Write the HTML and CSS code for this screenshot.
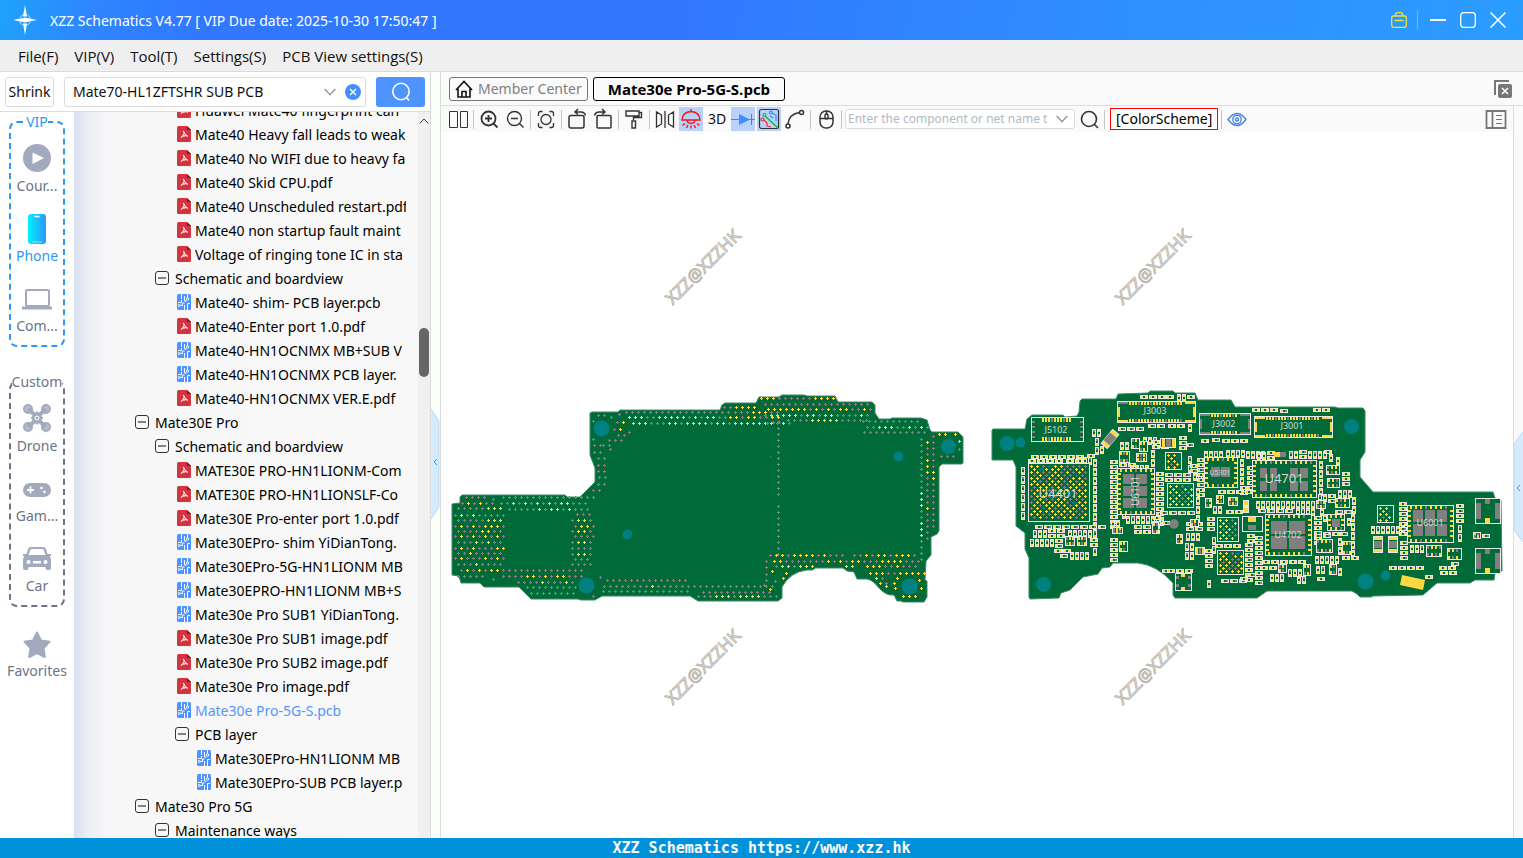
FILE: index.html
```html
<!DOCTYPE html>
<html lang="en">
<head>
    <meta charset="UTF-8">
    <meta name="viewport" content="width=device-width, initial-scale=1.0">
    <title>XZZ Schematics</title>
    <link rel="stylesheet" href="styles.css">
</head>
<body>
    <svg class="defs" aria-hidden="true">
        <symbol id="pdf" viewBox="0 0 14 16">
            <path d="M1.500 0H10L14 4V14.500Q14 16 12.500 16H1.500Q0 16 0 14.500V1.500Q0 0 1.500 0Z" fill="#d23540"/>
            <path d="M10 0L14 4H10Z" fill="#8f1620"/>
            <path d="M6.500 5Q7 8 10.800 10.500M7 7.500Q6.500 10 3.800 11.500M5.500 10.200L9 9.600" fill="none" stroke="#fff" stroke-width="1.100"/>
        </symbol>
        <symbol id="pcb" viewBox="0 0 14 16">
            <rect width="14" height="16" rx="1.500" fill="#4f93ff"/>
            <path d="M4.500 0V5M7.500 2V7H9.500M7.500 16V11M10.500 16V9.500H13M10.500 0V4M1 8.500H4.500V6M3 11.500H5.500V9H7.500" fill="none" stroke="#fff"/>
            <g fill="#4f93ff" stroke="#fff" stroke-width=".9"><circle cx="2.200" cy="11.500" r="1"/><circle cx="10.500" cy="5" r="1.200"/></g>
        </symbol>
        <symbol id="minus" viewBox="0 0 14 14">
            <rect x=".5" y=".5" width="13" height="13" rx="2.500" fill="none" stroke="#333"/>
            <path d="M3 7H11" stroke="#333" stroke-width="1.200"/>
        </symbol>
        <symbol id="chevron" viewBox="0 0 12 8">
            <path d="M.7 1L6 6.800L11.300 1" fill="none" stroke="#8f97a5" stroke-width="1.400"/>
        </symbol>
    </svg>

    <header class="titlebar">
        <svg class="logo" viewBox="0 0 26 30" fill="#fff">
            <path d="M13 0L15 11.500H11ZM13 30L15 18.500H11ZM1 15L11 13V17ZM25 15L15 13V17Z"/>
            <circle cx="13" cy="15" r="2.500"/>
            <circle cx="13" cy="15" r="5.500" fill="none" stroke="#fff" stroke-opacity=".7" stroke-dasharray="5 3.640" stroke-dashoffset="-2"/>
        </svg>
        <span class="title">XZZ Schematics V4.77 [ VIP Due date: 2025-10-30 17:50:47 ]</span>
        <div class="window-buttons">
            <button aria-label="Toolbox"><svg width="16" height="16" fill="none" stroke="#f2e33a" stroke-width="1.300"><rect x=".7" y="4" width="14.600" height="11.300" rx="2"/><path d="M4.500 4V2.500Q4.500 .7 6 .7H10Q11.500 .7 11.500 2.500V4M3.500 8.500H12.500"/></svg></button>
            <i></i>
            <button aria-label="Minimize"><svg width="16" height="16" stroke="#fff" stroke-width="2"><path d="M0 8H16"/></svg></button>
            <button aria-label="Maximize"><svg width="16" height="16" fill="none" stroke="#fff" stroke-width="1.300"><rect x=".7" y=".7" width="14.600" height="14.600" rx="3"/></svg></button>
            <button aria-label="Close"><svg width="16" height="16" stroke="#fff" stroke-width="1.500"><path d="M.5 .5L15.500 15.500M15.500 .5L.5 15.500"/></svg></button>
        </div>
    </header>

    <nav class="menu">
        <button>File(F)</button>
        <button>VIP(V)</button>
        <button>Tool(T)</button>
        <button>Settings(S)</button>
        <button>PCB View settings(S)</button>
    </nav>

    <main>
        <section class="left">
            <div class="search-row">
                <button class="shrink">Shrink</button>
                <div class="combo">
                    <input type="text" aria-label="Search files" value="Mate70-HL1ZFTSHR SUB PCB">
                    <svg width="12" height="8"><use href="#chevron"/></svg>
                    <button aria-label="Clear"><svg width="16" height="16"><circle cx="8" cy="8" r="8" fill="#4590f7"/><path d="M5 5L11 11M11 5L5 11" stroke="#fff" stroke-width="1.400"/></svg></button>
                </div>
                <button class="go" aria-label="Search"><svg width="20" height="20" fill="none" stroke="#fff" stroke-width="1.600"><circle cx="10" cy="9.500" r="8.200"/><path d="M15 15L18 18.500"/></svg></button>
            </div>

            <div class="browser">
                <nav class="side">
                    <fieldset class="vip">
                        <legend>VIP</legend>
                        <button><svg viewBox="0 0 28 28"><circle cx="14" cy="14" r="14" fill="#a2aabd"/><path d="M9.500 8.500V20L21 14Z" fill="#fff"/></svg>Cour...</button>
                        <button class="active"><svg viewBox="0 0 28 28"><defs><linearGradient id="ph"><stop stop-color="#00f0ff"/><stop offset="1" stop-color="#2e97ff"/></linearGradient></defs><rect x="5" y="0" width="18" height="30" rx="3" fill="url(#ph)"/><path d="M11.500 2.500H16.500" stroke="#fff" stroke-width="1.500"/><path d="M9 28H19" stroke="#8de4ff"/></svg>Phone</button>
                        <button><svg viewBox="0 0 28 28" fill="none" stroke="#a2aabd" stroke-width="2"><rect x="3" y="6" width="23" height="16" rx="1"/><path d="M-1 24H29" stroke-width="3"/></svg>Com...</button>
                    </fieldset>
                    <fieldset class="custom">
                        <legend>Custom</legend>
                        <button><svg viewBox="0 0 28 28" fill="none" stroke="#a2aabd" stroke-width="2"><g fill="#b8bfcc"><circle cx="5" cy="5" r="4"/><circle cx="23" cy="5" r="4"/><circle cx="5" cy="23" r="4"/><circle cx="23" cy="23" r="4"/></g><path d="M5 5L14 13L23 5M5 23L14 15L23 23" stroke-width="4"/><path d="M14 8.500L19 14L14 19.500L9 14Z" fill="#a2aabd"/><circle cx="14" cy="14" r="2" stroke="#fff" stroke-width="1"/></svg>Drone</button>
                        <button><svg viewBox="0 0 28 28"><rect y="9" width="28" height="14" rx="7" fill="#a2aabd"/><path d="M4 16H11M7.500 12.500V19.500" stroke="#fff" stroke-width="1.800"/><circle cx="18.500" cy="14" r="1.300" fill="#fff"/><circle cx="21.500" cy="18" r="1.300" fill="#fff"/></svg>Gam...</button>
                        <button><svg viewBox="0 0 28 28" fill="#a2aabd"><path d="M8 3H20Q22 3 23 5L24.500 10H28V12H26.500Q28 14 28 16V24Q28 26 26 26H24Q22.500 26 22.500 23H5.500Q5.500 26 4 26H2Q0 26 0 24V16Q0 14 1.500 12H0V10H3.500L5 5Q6 3 8 3Z"/><path d="M8.500 5H19.500Q20.500 5 21 6.500L22.500 11H5.500L7 6.500Q7.500 5 8.500 5ZM10 17H18V19.500H10Z" fill="#fff"/><circle cx="5.500" cy="18" r="2" fill="#fff"/><circle cx="22.500" cy="18" r="2" fill="#fff"/></svg>Car</button>
                    </fieldset>
                    <button class="favorites"><svg viewBox="0 0 28 28"><path d="M14 1.500L18 9.500L26.500 10.800L20.500 17L21.800 26L14 22L6.200 26L7.500 17L1.500 10.800L10 9.500Z" fill="#a2aabd" stroke="#a2aabd" stroke-width="2" stroke-linejoin="round"/></svg>Favorites</button>
                </nav>

                <ul class="tree">
                    <li class="l3"><svg><use href="#pdf"/></svg><span>Huawei Mate40 fingerprint can</span></li>
                    <li class="l3"><svg><use href="#pdf"/></svg><span>Mate40 Heavy fall leads to weak</span></li>
                    <li class="l3"><svg><use href="#pdf"/></svg><span>Mate40 No WIFI due to heavy fa</span></li>
                    <li class="l3"><svg><use href="#pdf"/></svg><span>Mate40 Skid CPU.pdf</span></li>
                    <li class="l3"><svg><use href="#pdf"/></svg><span>Mate40 Unscheduled restart.pdf</span></li>
                    <li class="l3"><svg><use href="#pdf"/></svg><span>Mate40 non startup fault maint</span></li>
                    <li class="l3"><svg><use href="#pdf"/></svg><span>Voltage of ringing tone IC in sta</span></li>
                    <li class="l2 node"><svg><use href="#minus"/></svg><span>Schematic and boardview</span></li>
                    <li class="l3"><svg><use href="#pcb"/></svg><span>Mate40- shim- PCB layer.pcb</span></li>
                    <li class="l3"><svg><use href="#pdf"/></svg><span>Mate40-Enter port 1.0.pdf</span></li>
                    <li class="l3"><svg><use href="#pcb"/></svg><span>Mate40-HN1OCNMX MB+SUB V</span></li>
                    <li class="l3"><svg><use href="#pcb"/></svg><span>Mate40-HN1OCNMX PCB layer.</span></li>
                    <li class="l3"><svg><use href="#pdf"/></svg><span>Mate40-HN1OCNMX VER.E.pdf</span></li>
                    <li class="l1 node"><svg><use href="#minus"/></svg><span>Mate30E Pro</span></li>
                    <li class="l2 node"><svg><use href="#minus"/></svg><span>Schematic and boardview</span></li>
                    <li class="l3"><svg><use href="#pdf"/></svg><span>MATE30E PRO-HN1LIONM-Com</span></li>
                    <li class="l3"><svg><use href="#pdf"/></svg><span>MATE30E PRO-HN1LIONSLF-Co</span></li>
                    <li class="l3"><svg><use href="#pdf"/></svg><span>Mate30E Pro-enter port 1.0.pdf</span></li>
                    <li class="l3"><svg><use href="#pcb"/></svg><span>Mate30EPro- shim YiDianTong.</span></li>
                    <li class="l3"><svg><use href="#pcb"/></svg><span>Mate30EPro-5G-HN1LIONM MB</span></li>
                    <li class="l3"><svg><use href="#pcb"/></svg><span>Mate30EPRO-HN1LIONM MB+S</span></li>
                    <li class="l3"><svg><use href="#pcb"/></svg><span>Mate30e Pro SUB1 YiDianTong.</span></li>
                    <li class="l3"><svg><use href="#pdf"/></svg><span>Mate30e Pro SUB1 image.pdf</span></li>
                    <li class="l3"><svg><use href="#pdf"/></svg><span>Mate30e Pro SUB2 image.pdf</span></li>
                    <li class="l3"><svg><use href="#pdf"/></svg><span>Mate30e Pro image.pdf</span></li>
                    <li class="l3 selected"><svg><use href="#pcb"/></svg><span>Mate30e Pro-5G-S.pcb</span></li>
                    <li class="l3 node"><svg><use href="#minus"/></svg><span>PCB layer</span></li>
                    <li class="l4"><svg><use href="#pcb"/></svg><span>Mate30EPro-HN1LIONM MB</span></li>
                    <li class="l4"><svg><use href="#pcb"/></svg><span>Mate30EPro-SUB PCB layer.p</span></li>
                    <li class="l1 node"><svg><use href="#minus"/></svg><span>Mate30 Pro 5G</span></li>
                    <li class="l2 node"><svg><use href="#minus"/></svg><span>Maintenance ways</span></li>
                </ul>
                <div class="scrollbar">
                    <svg width="10" height="6"><path d="M.5 5.500L5 1L9.500 5.500" fill="none" stroke="#444"/></svg>
                    <div class="thumb"></div>
                </div>
            </div>
        </section>

        <button class="gutter gutter-left" aria-label="Hide file list">
            <svg width="9" height="110"><path d="M0 0L8 12V98L0 110Z" fill="#d6eafc"/><path d="M0 0L8 12V98L0 110" fill="none" stroke="#b5d9f8"/><path d="M6 50L3 53L6 56" fill="none" stroke="#3d9bf5"/></svg>
        </button>

        <section class="right">
            <div class="tabs">
                <button class="tab"><svg width="18" height="18" fill="none" stroke="#111" stroke-width="1.600"><path d="M1 10L9 1.500L17 10M3 8.500V17H15V8.500M7 17V11.500H11V17"/></svg>Member Center</button>
                <button class="tab current">Mate30e Pro-5G-S.pcb</button>
                <button class="close-all" aria-label="Close all"><svg width="18" height="18"><path d="M1 15V1H15" fill="none" stroke="#777" stroke-width="2"/><rect x="4" y="4" width="14" height="14" rx="2" fill="#777"/><path d="M8 8L14 14M14 8L8 14" stroke="#fff" stroke-width="1.500"/></svg></button>
            </div>
            <div class="work">
                <div class="view">
                    <div class="toolbar">
                        <button aria-label="Split view"><svg viewBox="0 0 24 24"><path d="M3.500 4.500H11.500V20.500H3.500ZM14.500 4.500H21.500V20.500H14.500Z"/></svg></button>
                        <i></i>
                        <button aria-label="Zoom in"><svg viewBox="0 0 24 24" stroke-width="1.800"><circle cx="11.500" cy="11.500" r="7"/><path d="M16.500 16.500L20.500 20.500M8 11.500H15M11.500 8V15"/></svg></button>
                        <button aria-label="Zoom out"><svg viewBox="0 0 24 24" stroke-width="1.400"><circle cx="11.500" cy="11.500" r="7"/><path d="M16.500 16.500L20.500 20.500M8 11.500H15"/></svg></button>
                        <i></i>
                        <button aria-label="Fit"><svg viewBox="0 0 24 24" stroke-width="1.300"><circle cx="12" cy="12.500" r="5"/><path d="M4.500 9V6.500Q4.500 4.500 6.500 4.500H8.500M15.500 4.500H17.500Q19.500 4.500 19.500 6.500V9M19.500 16V18.500Q19.500 20.500 17.500 20.500H15.500M8.500 20.500H6.500Q4.500 20.500 4.500 18.500V16"/></svg></button>
                        <i></i>
                        <button aria-label="Rotate right"><svg viewBox="0 0 24 24" stroke-width="1.500"><rect x="4" y="8.500" width="15" height="12.500" rx="2"/><path d="M10 5H16Q19.500 5 20.500 8.500M13 2L10 5L13 7.500"/></svg></button>
                        <button aria-label="Rotate left"><svg viewBox="0 0 24 24" stroke-width="1.500"><rect x="6" y="8.500" width="14" height="12.500" rx="1"/><path d="M14 5H8Q4.500 5 3.500 8.500M11 2L14 5L11 7.500"/></svg></button>
                        <i></i>
                        <button aria-label="Paint"><svg viewBox="0 0 24 24" stroke-width="1.400"><path d="M4 4H17V9H4ZM17 5.500H19.500V10.500H11.500V13M10 14H13.500V21H10Z"/></svg></button>
                        <i></i>
                        <button aria-label="Mirror"><svg viewBox="0 0 24 24" stroke-width="1.300"><path d="M12 4V21M3.500 5V20L8.500 17V8ZM20.500 5V20L15.500 17V8Z"/></svg></button>
                        <button class="on" aria-label="Lamp"><svg class="red" viewBox="0 0 24 24" stroke-width="1.400"><path d="M3 13Q3.500 5 12 4.500Q20.500 5 21 13ZM12 2V5M8 13.500Q8.500 16.500 12 16.500Q15.500 16.500 16 13.500M6 16.500L3.500 18.500M9 18L7.500 21M12 18.500V21.500M15 18L16.500 21M18 16.500L20.500 18.500"/></svg></button>
                        <button class="three">3D</button>
                        <button class="on" aria-label="Diode"><svg viewBox="0 0 24 24"><path d="M0 12.500H24M20.500 7V18" stroke="#4080f0"/><path d="M8 7V18L19 12.500Z" fill="#3f8cff" stroke="none"/></svg></button>
                        <button class="on" aria-label="Nets"><svg viewBox="0 0 24 24" stroke-width="1.200"><rect x="2.500" y="2.500" width="19" height="19" rx="2"/><path d="M8 9L21 21" stroke="#18b83c" stroke-width="1.500"/><circle cx="7.500" cy="8" r="1.500" stroke="#18b83c"/><path d="M15 6L19 8V14M13 9L16 11" stroke="#2f8cf7"/><circle cx="14" cy="5.500" r="1.500" stroke="#2f8cf7"/><path d="M7 13L10 16V19L14 20" stroke="#f03030"/><circle cx="5.500" cy="12.500" r="1.500" stroke="#f03030"/></svg></button>
                        <button aria-label="Arc"><svg viewBox="0 0 24 24" stroke-width="1.500"><circle cx="18.500" cy="5.500" r="2"/><circle cx="5" cy="19" r="2"/><path d="M5 17Q6 7 16.500 5.500"/></svg></button>
                        <i></i>
                        <button aria-label="Mouse"><svg viewBox="0 0 24 24" stroke-width="1.500"><rect x="6" y="4" width="13" height="17" rx="6"/><path d="M6 11.500H19M12.500 8V4"/><rect x="11" y="7" width="3" height="5" rx="1.500"/></svg></button>
                        <i></i>
                        <div class="combo net">
                            <input type="text" aria-label="Component or net name" placeholder="Enter the component or net name to search">
                            <svg width="12" height="8"><use href="#chevron"/></svg>
                        </div>
                        <button aria-label="Find"><svg viewBox="0 0 24 24" stroke-width="1.600"><circle cx="12" cy="12" r="7.500"/><path d="M17 17L21 21"/></svg></button>
                        <i></i>
                        <button class="scheme">[ColorScheme]</button>
                        <i></i>
                        <button aria-label="Visibility"><svg class="blue" viewBox="0 0 24 24" stroke-width="1.400"><path d="M3 12.500Q12 .5 21 12.500Q12 24.500 3 12.500Z"/><circle cx="12" cy="12.500" r="4.200"/><circle cx="12" cy="12.500" r="1.500"/></svg></button>
                        <button class="panel" aria-label="Panel"><svg viewBox="0 0 24 24" stroke-width="1.800"><path d="M2.500 4H21.500V21H2.500ZM8.500 4V21"/><path d="M12 8.500H18M12 12.500H18M12 16.500H18" stroke-width="1.200"/></svg></button>
                    </div>

                    <svg class="canvas" viewBox="441 132 1072 706">
                        <g class="watermark">
                            <text transform="translate(704 268) rotate(-45)">XZZ@XZZHK</text>
                            <text transform="translate(1154 268) rotate(-45)">XZZ@XZZHK</text>
                            <text transform="translate(704 668) rotate(-45)">XZZ@XZZHK</text>
                            <text transform="translate(1154 668) rotate(-45)">XZZ@XZZHK</text>
                        </g>
                        <g class="pcb-body">
                            <path d="M452 504L460 503V497L462 495H565L567 497H580L595 482V468L590 455V413L592 412H618L620 410H720L722 405L725 403H756L759 397H779L782 395H804L807 396H835L838 402H872L875 405V413L879 419H890L892 418H921L927 420L930 430L932 432H958L963 437V463L962 464H942L939 467V531L937 534L931 537V555L926 561L925 580L927 581V597L924 602H903L901 601H897L894 595Q886 596 879 588Q873 580 867 579H857L854 572L847 571L843 568H815L813 570H807Q790 572 782 587V598L778 601H698L690 596H602L595 600H581L578 599H531L519 587H484L480 583H461L459 576L452 575Z"/>
                            <path d="M992 460V430L993 429H1025L1027 419L1032 415H1063L1065 417L1077 416L1079 412L1080 401L1082 399H1116L1118 394L1148 393L1150 391H1173L1175 393H1195L1198 400H1231L1235 407H1335L1338 408H1363L1365 411V452L1360 460V477L1373 492H1493L1495 498L1501 500L1502 571L1495 573L1494 580H1475L1470 583H1437L1423 595L1373 596L1371 597H1360L1357 594L1352 591H1267L1257 598H1175L1173 595V583Q1157 565 1138 563H1113L1110 567L1102 568L1098 574L1083 577L1070 590L1061 593L1059 598L1030 599L1029 597V558L1025 549V533L1016 526V467L1013 460Z"/>
                        </g>
                        <g id="pads"></g>
                        <g class="hole">
                            <circle cx="601.500" cy="428.500" r="8"/><circle cx="627.500" cy="534.500" r="5"/><circle cx="586.500" cy="585.500" r="8"/>
                            <circle cx="948.500" cy="446.500" r="7.500"/><circle cx="898.500" cy="456.500" r="5"/><circle cx="909.500" cy="586.500" r="8"/>
                            <circle cx="1007" cy="443.500" r="7.500"/><circle cx="1020.500" cy="442.500" r="5"/><circle cx="1043.500" cy="584.500" r="7.500"/>
                            <circle cx="1351.500" cy="426.500" r="7.500"/><circle cx="1365.500" cy="581.500" r="8"/><circle cx="1385.500" cy="575.500" r="5"/>
                        </g>
                        <path d="M1402 575L1425 580L1423 590L1400 585Z" fill="#ffd840"/>
                        <g transform="rotate(40 1110 439)"><rect x="1106" y="430" width="8" height="18" fill="#ffd840" stroke="#e8e8e8"/><rect x="1106" y="434" width="8" height="10" fill="#808080"/></g>
                        <circle cx="1174" cy="524" r="4.700" fill="#808080"/>
                        <g class="ref">
                            <text x="1056" y="433">J5102</text>
                            <text x="1155" y="414">J3003</text>
                            <text x="1224" y="427">J3002</text>
                            <text x="1292" y="429">J3001</text>
                            <text x="1058" y="498" class="big">U4401</text>
                            <text class="mid" transform="translate(1139 491) rotate(-90)">U6101</text>
                            <text x="1220" y="475" class="small">U5301</text>
                            <text x="1284" y="483" class="big">U4701</text>
                            <text x="1288" y="538">U4702</text>
                            <text x="1430" y="526">U6001</text>
                        </g>
                    </svg>
                </div>
                <button class="gutter gutter-right" aria-label="Show side panel">
                    <svg width="9" height="110"><path d="M9 0L0 12V98L9 110Z" fill="#d6eafc"/><path d="M9 0L0 12V98L9 110" fill="none" stroke="#b5d9f8"/><path d="M6 53L3 56L6 59" fill="none" stroke="#3d9bf5"/></svg>
                </button>
            </div>
        </section>
    </main>

    <footer>XZZ Schematics https://www.xzz.hk</footer>
    <script src="board.js"></script>
</body>
</html>
```
FILE: styles.css
```css
* {
    box-sizing: border-box;
}
body {
    margin: 0;
    height: 100vh;
    display: flex;
    flex-direction: column;
    overflow: hidden;
    background: #fff;
    color: #111;
    font-family: "Noto Sans", "Noto Sans CJK SC", sans-serif;
    font-size: 14px;
    line-height: 20px;
}
button,
input {
    font: inherit;
    color: inherit;
    margin: 0;
    padding: 0;
    border: 0;
    background: none;
}
svg {
    display: block;
    flex: none;
}
.defs {
    position: absolute;
    width: 0;
    height: 0;
}

/* title bar */
.titlebar {
    height: 40px;
    flex: none;
    display: flex;
    align-items: center;
    padding: 0 17px 0 12px;
    color: #fff;
    background: linear-gradient(100deg, #1fa2fb 0, #2e86ff 90px, #3178ff 200px, #3178ff 45%, #2f90ff 75%, #2a9cff 100%);
}
.logo {
    width: 26px;
    height: 30px;
    margin-right: 12px;
}
.title {
    flex: 1;
    padding-top: 2px;
    white-space: nowrap;
}
.window-buttons {
    display: flex;
    align-items: center;
    gap: 14px;
}
.window-buttons i {
    width: 1px;
    height: 20px;
    margin: 0 -2px 0 -4px;
    background: #73b8ff;
}

/* menu */
.menu {
    height: 32px;
    flex: none;
    display: flex;
    align-items: center;
    gap: 16px;
    padding: 0 18px;
    background: #efefef;
    border-bottom: 1px solid #dadada;
    font-family: "Open Sans", sans-serif;
    font-size: 15px;
}

main {
    flex: 1;
    min-height: 0;
    display: flex;
}
.left {
    width: 431px;
    flex: none;
    display: flex;
    flex-direction: column;
    border-right: 1px solid #dcdcdc;
}
.search-row {
    height: 40px;
    flex: none;
    display: flex;
    align-items: center;
    padding: 0 5px;
    border-bottom: 1px solid #dcdcdc;
}
.shrink {
    width: 49px;
    height: 30px;
    border: 1px solid #dcdcdc;
    border-radius: 3px;
    white-space: nowrap;
}
.combo {
    display: flex;
    align-items: center;
    border: 1px solid #dcdcdc;
    border-radius: 3px;
    background: #fff;
}
.search-row .combo {
    flex: 1;
    height: 30px;
    margin: 0 10px;
    padding: 0 4px 0 8px;
    gap: 9px;
}
.combo input {
    flex: 1;
    min-width: 0;
    outline: none;
}
.go {
    width: 49px;
    height: 30px;
    border-radius: 3px;
    background: #4f93ff;
}
.go svg {
    margin: 0 auto;
}

/* categories */
.browser {
    flex: 1;
    min-height: 0;
    display: flex;
}
.side {
    width: 74px;
    flex: none;
    display: flex;
    flex-direction: column;
    align-items: center;
    color: #6b7487;
}
.side fieldset {
    width: 56px;
    min-width: 0;
    margin: 0;
    padding: 2px 0 1px;
    border: 2px dashed;
    border-radius: 8px;
}
.side legend {
    margin: 0 auto;
    padding: 0;
}
.side button {
    display: flex;
    flex-direction: column;
    align-items: center;
    gap: 4px;
    width: 100%;
    height: 70px;
    padding-top: 10px;
}
.side button svg {
    width: 28px;
    height: 28px;
    overflow: visible;
}
.side .vip {
    border-color: #2e97f5;
}
.vip legend,
.side .active {
    color: #2e97f5;
}
.side .custom {
    margin-top: 25px;
}
.side .favorites {
    gap: 2px;
    margin-top: 14px;
}

/* file tree */
.tree {
    flex: 1;
    min-width: 0;
    margin: 0;
    padding: 0 12px 0 61px;
    overflow: hidden;
    list-style: none;
    color: #000;
    background: linear-gradient(90deg, #d9e1f1 0, #ebeef4 14px, #f7f7f8 34px, #f8f8f8 100%);
}
.tree li:first-child {
    margin-top: -14px;
}
.tree li {
    height: 24px;
    display: flex;
    align-items: center;
    gap: 4px;
    white-space: nowrap;
    overflow: hidden;
}
.tree span {
    padding-top: 2px;
}
.tree svg {
    width: 14px;
    height: 16px;
}
.tree .node {
    gap: 6px;
}
.tree .node svg {
    height: 14px;
}
.l2 {
    padding-left: 20px;
}
.l3 {
    padding-left: 42px;
}
.l4 {
    padding-left: 62px;
}
.l3.node {
    padding-left: 40px;
}
.selected {
    color: #5596ff;
}
.scrollbar {
    width: 12px;
    flex: none;
    padding-top: 6px;
    background: #f0f0f0;
}
.scrollbar svg {
    margin: 0 auto;
}
.thumb {
    width: 10px;
    height: 49px;
    margin: 204px auto 0;
    border-radius: 5px;
    background: #666;
}

/* collapse handles */
.gutter {
    width: 9px;
    flex: none;
    display: flex;
    align-items: center;
}
.gutter-left {
    padding-top: 18px;
    background: #fafffa;
}
.gutter-right {
    padding-top: 30px;
    background: #fafafa;
}

.right {
    flex: 1;
    min-width: 0;
    display: flex;
    flex-direction: column;
    border-left: 1px solid #dcdcdc;
}
.tabs {
    height: 34px;
    flex: none;
    display: flex;
    align-items: center;
    gap: 5px;
    padding: 0 11px 0 8px;
    background: #fafafa;
    border-bottom: 1px solid #dcdcdc;
}
.tab {
    height: 24px;
    display: flex;
    align-items: center;
    gap: 5px;
    padding: 0 5px;
    border: 1px solid #777;
    border-radius: 3px;
    color: #808080;
    white-space: nowrap;
}
.tab.current {
    padding: 0 14px;
    border-color: #000;
    color: #000;
    font-family: "Open Sans", sans-serif;
    font-size: 15px;
    font-weight: bold;
}
.close-all {
    margin-left: auto;
}
.work {
    flex: 1;
    min-height: 0;
    display: flex;
}
.view {
    flex: 1;
    min-width: 0;
    display: flex;
    flex-direction: column;
    border-right: 1px solid #dcdcdc;
}
.toolbar {
    height: 26px;
    flex: none;
    display: flex;
    align-items: center;
    gap: 2px;
    padding: 0 5px;
    background: #fafafa;
}
.toolbar > button {
    height: 24px;
    flex: none;
}
.toolbar > button svg {
    width: 24px;
    height: 24px;
    fill: none;
    stroke: #333;
}
.toolbar > i {
    width: 1px;
    height: 19px;
    margin: 0 1px;
    background: #c4c4c4;
}
.toolbar .three {
    width: 24px;
}
.toolbar .on {
    background: #b9d2fb;
}
.toolbar > button .red {
    stroke: #ff1010;
}
.toolbar > button .blue {
    stroke: #4a86e0;
}
.net {
    width: 230px;
    height: 20px;
    padding: 0 6px 0 2px;
    gap: 9px;
    font-size: 12px;
}
.net input::placeholder {
    color: #b4b8c0;
    opacity: 1;
}
.toolbar > .scheme {
    height: 22px;
    margin-left: 2px;
    padding: 0 5px;
    border: 1px solid #f00;
    background: #fff;
    color: #000;
}
.toolbar > .panel {
    margin-left: auto;
}
.toolbar > .panel svg {
    stroke: #777;
}

/* board */
.canvas {
    flex: 1;
    min-height: 0;
    width: 100%;
}
.watermark {
    fill: #fff;
    stroke: #bcb8ae;
    stroke-width: 1;
    font-size: 17px;
    text-anchor: middle;
    dominant-baseline: middle;
}
.pcb-body {
    fill: #006b38;
    stroke: #3a8b62;
    stroke-linejoin: round;
}
.hole {
    fill: #008080;
}
.ref {
    fill: #d8d8d8;
    font-size: 9px;
    text-anchor: middle;
}
.ref .big {
    font-size: 13px;
}
.ref .mid {
    font-size: 10px;
}
.ref .small {
    font-size: 7px;
}

footer {
    height: 20px;
    flex: none;
    background: #0091db;
    color: #fff;
    text-align: center;
    font-family: "DejaVu Sans Mono", monospace;
    font-size: 15px;
    font-weight: bold;
}
```
FILE: board.js
```javascript
const YELLOW = "#ffd840";
const GREY = "#808080";
const TEAL = "#008080";
const GREEN = "#006b38";
const WHITE = "#e8e8e8";

let out = "";

function rect(x, y, w, h, fill) {
    out += `<rect x="${x}" y="${y}" width="${w}" height="${h}" fill="${fill}"/>`;
}
function box(x, y, w, h) {
    rect(x, y, w, h, WHITE);
    rect(x + 1, y + 1, w - 2, h - 2, GREEN);
}
function cross(x, y, fill) {
    rect(x - 1, y, 3, 1, fill);
    rect(x, y - 1, 1, 3, fill);
}

// back side vias: y, first x, pattern (g grey, y yellow, space nothing)
const vias = [
    [497, 466, "gggg"], [499, 493, "g"], [497, 503, "gggggggggggggggg"],
    [503, 462, "gygygg"], [503, 501, "ggygygygygyyggg"],
    [508, 458, "gggggyyy"], [509, 509, "gggggygyygyggg"],
    [515, 455, "gygyggggg"], [514, 577, "ggg"],
    [520, 458, "gggggyyy"], [520, 572, "gyyg"],
    [526, 455, "gygygyyyg"], [526, 575, "gyyg"],
    [531, 458, "ggggyygg"], [531, 572, "gyyg"],
    [536, 455, "gygygygyg"], [536, 575, "gggg"],
    [542, 458, "gggygygg"], [542, 572, "gyyg"],
    [548, 455, "gygygggyy"], [548, 572, "gggg"],
    [553, 458, "ggyggggg"], [554, 572, "gyyg"],
    [558, 455, "gygggygyg"], [559, 575, "ggg"],
    [564, 458, "gggygggg"], [564, 572, "gggg"],
    [570, 461, "gygygyygggggggggggggg"],
    [576, 458, "ggggg"], [579, 493, "g"], [576, 503, "ggggyygygyyggg"],
    [582, 518, "ggggygggyg"], [587, 527, "ggggggggg"], [593, 531, "gggggggg"],
    [577, 600, "g"], [580, 607, "gggggggggggggg"],
    [586, 604, "ggggggggygggggggggggggggggggg"],
    [591, 603, "ggggggggggggggg"],
    [596, 593, "g"], [592, 703, "gggggggggggg"], [596, 698, "gggyyygyyyyggg"],
    [415, 598, "gg"], [421, 593, "g"], [417, 611, "g"], [414, 619, "g"],
    [422, 617, "gy"], [429, 614, "gy"], [435, 618, "gg"], [440, 609, "ggg"], [445, 603, "gg"],
    [439, 593, "g"], [445, 594, "gg"], [452, 594, "gg"], [449, 610, "g"], [432, 629, "g"],
    [458, 598, "gg"], [465, 598, "gg"], [471, 598, "gg"], [477, 599, "gg"], [484, 598, "gg"], [490, 593, "gg"],
    [412, 626, "gggggggggggggggggg"],
    [417, 629, "yyyggyyyyygygyygg"], [423, 633, "yyygggyygyyyygyygyyyyyyygyg"],
    [407, 724, "ggyyyy"], [412, 735, "gggyyygg"],
    [417, 730, "yygyyggyy"],
    [398, 761, "yyyggggggyyyy"], [404, 765, "gggggggggggggggggg"],
    [409, 768, "yyyyyyygygygyyggyg"], [415, 765, "gyyyyygyygyyggggyg"],
    [420, 788, "ggggyyyyyggggg"], [423, 767, "g"], [422, 773, "gg"],
    [421, 863, "gggggggggg"], [427, 867, "ggyyyggygyg"], [432, 864, "ggggggggggg"],
    [434, 939, "yy"], [434, 955, "y"], [456, 941, "ggg"], [441, 959, "y"], [449, 959, "g"],
    [555, 770, "gyygyyyygyggg ggygyygyyyg"],
    [561, 774, "yygggggggygygyygggyyyyggg"], [566, 776, "gyygyyy"], [566, 846, "yy"], [566, 867, "yyyggyggg"],
    [561, 766, "g"], [567, 766, "g"], [574, 766, "g"], [580, 766, "g"], [585, 764, "g"],
    [571, 772, "y"], [573, 786, "y"], [578, 783, "y"], [581, 775, "g"], [589, 770, "y"],
    [573, 870, "yyyggyyyyy"], [578, 876, "yg"], [578, 897, "y"], [583, 880, "yg"], [586, 886, "y"],
    [583, 894, "y"], [588, 895, "y"], [580, 919, "y"], [588, 921, "y"], [596, 903, "yyy"]
];
vias.forEach(function([y, x, pattern]) {
    [...pattern].forEach(function(c, i) {
        if (c !== " ") cross(x + i * 6, y, c === "y" ? YELLOW : GREY);
    });
});
// columns: x, first y, pattern
const columns = [
    [778, 422, "ggggggggggggg ggggggggg"],
    [921, 439, "gggggggggyyyggyyygggg"],
    [927, 442, "yggyyygggggyggggg"],
    [933, 436, "ggggggyygggggggg"]
];
columns.forEach(function([x, y, pattern]) {
    [...pattern].forEach(function(c, i) {
        if (c !== " ") cross(x, y + i * 6, c === "y" ? YELLOW : GREY);
    });
});
cross(770, 456, TEAL);

// two-pad parts
function hchip(x, y) {
    rect(x, y, 8, 4, WHITE);
    rect(x + 1, y + 1, 2, 2, YELLOW);
    rect(x + 3, y + 1, 2, 2, GREEN);
    rect(x + 5, y + 1, 2, 2, (x + y) % 3 ? YELLOW : GREY);
}
function vchip(x, y) {
    rect(x, y, 4, 8, WHITE);
    rect(x + 1, y + 1, 2, 2, (x + y) % 3 ? YELLOW : GREY);
    rect(x + 1, y + 3, 2, 2, GREEN);
    rect(x + 1, y + 5, 2, 2, YELLOW);
}
// x, y, kind, columns, rows
const chips = [
    [1140, 395, "h", 3, 1], [1166, 395, "h", 1, 1], [1177, 394, "v", 2, 1], [1187, 395, "h", 1, 1],
    [1118, 427, "h", 3, 1], [1148, 424, "h", 2, 1], [1168, 424, "h", 2, 1], [1188, 424, "v", 1, 1],
    [1201, 439, "h", 1, 1], [1212, 438, "h", 1, 1], [1222, 439, "h", 3, 1],
    [1092, 429, "v", 2, 1], [1095, 438, "v", 1, 2], [1100, 446, "v", 1, 1],
    [1031, 455, "h", 6, 1], [1028, 459, "h", 4, 1], [1066, 459, "h", 2, 1], [1087, 454, "h", 1, 1], [1078, 457, "v", 3, 1],
    [1021, 467, "v", 1, 6], [1093, 459, "v", 1, 9],
    [1035, 525, "h", 8, 1], [1033, 530, "v", 3, 1], [1048, 529, "h", 2, 2], [1068, 530, "v", 6, 1],
    [1030, 539, "v", 5, 1], [1055, 539, "h", 1, 3], [1090, 538, "h", 1, 2], [1054, 549, "h", 2, 1],
    [1060, 554, "h", 1, 1], [1070, 552, "v", 4, 1], [1093, 548, "v", 1, 1],
    [1110, 460, "h", 1, 14], [1119, 463, "h", 2, 1], [1111, 520, "v", 2, 1], [1110, 538, "h", 1, 5], [1122, 511, "v", 1, 1],
    [1143, 437, "v", 3, 1], [1152, 440, "h", 2, 2], [1151, 450, "v", 1, 2], [1120, 442, "v", 2, 1], [1130, 465, "v", 4, 1],
    [1156, 472, "h", 1, 11], [1126, 516, "v", 7, 1], [1134, 525, "h", 3, 2], [1153, 516, "h", 1, 2], [1162, 521, "h", 1, 1],
    [1165, 473, "h", 3, 2], [1193, 473, "v", 3, 1], [1160, 511, "h", 4, 1], [1179, 436, "h", 1, 3], [1186, 443, "h", 1, 1],
    [1188, 456, "v", 1, 2], [1197, 458, "h", 1, 8], [1196, 488, "v", 1, 4], [1190, 464, "h", 1, 2],
    [1204, 451, "v", 4, 1], [1226, 450, "v", 4, 1], [1246, 451, "v", 4, 1],
    [1240, 459, "v", 1, 3], [1247, 466, "h", 1, 5], [1240, 486, "h", 1, 2], [1218, 490, "h", 4, 1],
    [1213, 506, "v", 2, 1], [1226, 510, "h", 2, 1], [1186, 522, "h", 2, 2], [1207, 517, "h", 1, 3], [1212, 537, "v", 1, 2],
    [1186, 533, "v", 3, 1], [1185, 543, "v", 2, 2], [1215, 544, "h", 3, 1], [1205, 549, "h", 1, 4], [1162, 569, "h", 1, 1],
    [1167, 569, "h", 3, 1], [1221, 579, "h", 3, 1], [1207, 580, "v", 1, 1],
    [1245, 543, "h", 1, 8], [1255, 536, "h", 1, 10], [1240, 577, "h", 1, 1], [1248, 573, "h", 1, 1], [1247, 534, "h", 1, 2],
    [1252, 408, "h", 3, 1], [1280, 409, "h", 1, 1], [1313, 408, "h", 2, 1],
    [1257, 452, "v", 2, 1], [1267, 451, "h", 1, 2], [1289, 451, "v", 2, 1], [1299, 450, "h", 1, 2], [1308, 451, "v", 4, 1], [1324, 450, "h", 1, 1], [1329, 454, "v", 1, 1],
    [1319, 461, "v", 1, 4], [1336, 457, "v", 1, 1], [1342, 472, "h", 1, 3], [1318, 494, "v", 2, 1], [1328, 494, "h", 1, 2], [1338, 490, "v", 3, 1],
    [1352, 497, "v", 1, 2], [1335, 510, "h", 2, 1], [1351, 514, "v", 1, 5],
    [1256, 501, "v", 13, 1], [1258, 509, "h", 4, 1], [1296, 508, "v", 4, 1], [1320, 508, "v", 1, 1],
    [1314, 516, "h", 1, 6], [1323, 514, "v", 1, 1], [1323, 532, "h", 2, 1], [1340, 532, "h", 1, 1], [1347, 518, "v", 1, 1],
    [1314, 534, "h", 2, 1], [1338, 538, "v", 1, 2], [1315, 556, "v", 5, 1], [1342, 556, "h", 2, 1],
    [1262, 560, "h", 5, 1], [1260, 566, "h", 2, 1], [1270, 574, "v", 3, 1], [1288, 569, "v", 3, 1], [1297, 576, "v", 2, 1],
    [1316, 566, "v", 2, 1], [1317, 577, "h", 1, 1], [1338, 568, "v", 1, 1],
    [1371, 526, "v", 7, 1], [1399, 502, "h", 1, 7], [1400, 541, "h", 1, 4], [1410, 545, "v", 3, 1],
    [1456, 504, "h", 1, 4], [1458, 525, "v", 1, 2], [1389, 566, "h", 4, 1], [1439, 566, "h", 2, 1], [1440, 571, "h", 2, 1],
    [1482, 534, "h", 1, 1], [1425, 575, "h", 1, 1], [1451, 562, "h", 1, 1]
];
chips.forEach(function([x, y, kind, cols, rows]) {
    for (let r = 0; r < rows; r++) {
        for (let c = 0; c < cols; c++) {
            if (kind === "h") hchip(x + c * 9, y + r * 5);
            else vchip(x + c * 5, y + r * 9);
        }
    }
});

// small square parts with pads on both sides
const smalls = [
    [1065, 536, 10, 10], [1077, 536, 10, 10], [1119, 451, 11, 12], [1131, 438, 9, 11], [1139, 441, 9, 11], [1136, 453, 11, 9],
    [1112, 527, 11, 7], [1119, 541, 9, 11], [1152, 522, 7, 12], [1190, 519, 9, 8], [1176, 534, 7, 10], [1195, 547, 10, 8],
    [1205, 498, 7, 10], [1216, 495, 8, 9], [1228, 497, 10, 9], [1326, 465, 14, 10], [1327, 478, 13, 10], [1335, 498, 15, 10],
    [1316, 539, 17, 14], [1342, 541, 10, 14], [1316, 500, 10, 9], [1278, 564, 9, 9], [1303, 564, 8, 12], [1329, 564, 8, 11],
    [1426, 545, 16, 12], [1447, 548, 15, 12], [1473, 532, 8, 7]
];
smalls.forEach(function([x, y, w, h], n) {
    const step = w > 12 ? 4 : 3;
    box(x, y, w, h);
    for (let i = x + 1, k = n; i < x + w - 2; i += step, k++) {
        rect(i, y + 1, 2, 3, k % 3 ? YELLOW : GREY);
        rect(i, y + h - 4, 2, 3, k % 2 ? YELLOW : GREY);
    }
});

// pads round the edge of a part
function edgePads(x, y, w, h, step, len) {
    for (let i = x + 3, n = 0; i < x + w - 4; i += step, n++) {
        rect(i, y + 1, 2, len, n % 4 === 3 ? GREY : YELLOW);
        rect(i, y + h - 1 - len, 2, len, n % 5 === 2 ? GREY : YELLOW);
    }
}
function sidePads(x, y, w, h, step, fill) {
    for (let i = y + 5; i < y + h - 5; i += step) {
        rect(x + 1, i, 3, 2, fill);
        rect(x + w - 4, i, 3, 2, fill);
    }
}
[[1117, 401, 79, 22], [1254, 416, 79, 22], [1199, 413, 52, 22]].forEach(function([x, y, w, h], n) {
    box(x, y, w, h);
    const end = n < 2 ? YELLOW : GREY;
    rect(x + 1, y + 1, 10, 2, n === 1 ? end : GREY);
    rect(x + w - 11, y + 1, 10, 2, end);
    rect(x + 1, y + h - 3, 10, 2, end);
    rect(x + w - 11, y + h - 3, 10, 2, end);
    rect(x + 1, y + 6, 2, 10, end);
    rect(x + w - 3, y + 6, 2, 10, end);
    edgePads(x + 9, y, w - 18, h, 3, 3);
});
box(1031, 417, 53, 25);
edgePads(1039, 417, 37, 25, 3, 4);
sidePads(1031, 416, 53, 27, 5, GREY);

// packages with a grey thermal pad grid
function pack(x, y, w, h, px, py, pw, ph, cols, rows, gap) {
    box(x, y, w, h);
    edgePads(x, y, w, h, 5, 3);
    sidePads(x, y, w, h, 5, YELLOW);
    for (let r = 0; r < rows; r++) {
        for (let c = 0; c < cols; c++) {
            rect(px + c * (pw + gap), py + r * (ph + gap), pw, ph, GREY);
        }
    }
}
pack(1117, 468, 38, 47, 1123, 474, 11, 10, 2, 3, 2);
pack(1204, 457, 34, 31, 1211, 467, 9, 10, 2, 1, 1);
pack(1252, 460, 65, 38, 1260, 468, 7, 10, 2, 2, 3);
for (let i = 0; i < 2; i++) {
    for (let j = 0; j < 2; j++) rect(1290 + i * 10, 468 + j * 13, 8, 10, GREY);
}
pack(1265, 514, 47, 42, 1271, 521, 16, 13, 2, 2, 2);
pack(1327, 514, 18, 17, 1332, 519, 8, 8, 1, 1, 0);
pack(1407, 505, 47, 38, 1413, 510, 10, 12, 3, 2, 2);

// ball grids
[[1028, 463, 62, 59], [1165, 452, 17, 18], [1167, 483, 27, 25], [1217, 517, 22, 25], [1217, 550, 27, 25], [1377, 505, 17, 18]].forEach(function([x, y, w, h]) {
    box(x, y, w, h);
    for (let j = 0; j * 3 < h - 5; j++) {
        for (let i = j % 2; i * 3 < w - 5; i += 2) {
            const k = (i * i * 7 + j * 13 + i * j * 5) % 23;
            cross(x + 3 + i * 3, y + 3 + j * 3, k < 12 ? YELLOW : k < 22 ? GREY : TEAL);
        }
    }
});

// capacitors and antenna contacts
[[1373, 536, 10, 17], [1388, 536, 10, 17]].forEach(function([x, y, w, h]) {
    box(x, y, w, h);
    rect(x + 1, y + 1, w - 2, 3, YELLOW);
    rect(x + 1, y + 5, w - 2, 7, GREY);
    rect(x + 1, y + h - 4, w - 2, 3, YELLOW);
});
box(1160, 438, 16, 10);
rect(1162, 439, 3, 8, YELLOW);
rect(1166, 439, 5, 8, GREY);
rect(1172, 439, 3, 8, YELLOW);
rect(1243, 500, 6, 13, WHITE);
rect(1244, 501, 4, 4, YELLOW);
rect(1244, 508, 4, 4, YELLOW);
rect(1274, 452, 6, 5, YELLOW);
rect(1280, 452, 6, 5, GREY);
box(1242, 516, 21, 16);
rect(1248, 517, 8, 5, YELLOW);
rect(1248, 525, 8, 5, GREY);
box(1175, 573, 17, 18);
rect(1181, 574, 4, 3, YELLOW);
rect(1181, 587, 4, 3, YELLOW);
rect(1176, 576, 3, 3, GREY);
rect(1188, 576, 3, 3, GREY);
rect(1176, 584, 3, 3, GREY);
rect(1188, 584, 3, 3, GREY);
[[1475, 498], [1475, 548]].forEach(function([x, y]) {
    box(x, y, 26, 26);
    rect(x + 1, y + 5, 5, 16, GREY);
    rect(x + 20, y + 5, 5, 16, GREY);
    rect(x + 10, y + 1, 5, 5, GREY);
    rect(x + 10, y + 20, 5, 5, YELLOW);
});

document.getElementById("pads").innerHTML = out;
```
